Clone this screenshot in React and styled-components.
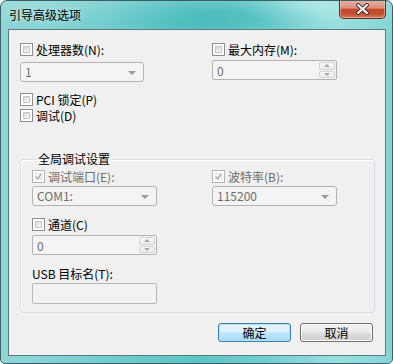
import styled, { createGlobalStyle } from "styled-components";

const GlobalStyle = createGlobalStyle`
  html, body {
    margin: 0;
    padding: 0;
    background: #ffffff;
  }
  * {
    box-sizing: border-box;
  }
`;

const Window = styled.div`
  width: 393px;
  height: 364px;
  border: 1px solid #3d5f63;
  border-radius: 7px 7px 5px 5px;
  padding: 0 6px 7px 7px;
  display: flex;
  flex-direction: column;
  overflow: hidden;
  font-family: "Noto Sans CJK SC", "Noto Sans", sans-serif;
  font-size: 12px;
  background:
    linear-gradient(180deg, rgba(255, 255, 255, 0.15) 0, rgba(255, 255, 255, 0) 22px),
    radial-gradient(ellipse 110px 26px at 215px 12px, rgba(60, 182, 184, 0.9) 0%, rgba(60, 182, 184, 0) 100%),
    radial-gradient(ellipse 60px 20px at 300px 6px, rgba(175, 232, 232, 0.9) 0%, rgba(175, 232, 232, 0) 100%),
    linear-gradient(90deg, #8fd6d6 0%, #86d3d4 12%, #6ecbcc 30%, #5cc4c5 50%, #74cecf 68%, #9adfdf 86%, #85d5d6 100%);
`;

const TitleBar = styled.div`
  height: 28px;
  display: flex;
  align-items: flex-start;
  justify-content: space-between;
`;

const Title = styled.div`
  margin: 6px 0 0 1px;
  line-height: 16px;
  color: #000;
  text-shadow: 0 0 6px rgba(255, 255, 255, 0.8);
`;

const CloseButton = styled.div`
  width: 47px;
  height: 19px;
  margin-top: -1px;
  border: 1px solid #5e2d24;
  border-top: none;
  border-radius: 0 0 5px 5px;
  display: flex;
  align-items: center;
  justify-content: center;
  box-shadow: inset 0 0 0 1px rgba(255, 220, 210, 0.45);
  background: linear-gradient(180deg, #eab3a6 0%, #dd8c7b 45%, #c6472c 52%, #c44f30 78%, #da7b5d 100%);
`;

const Client = styled.div`
  flex: 1;
  border: 1px solid #5d7c82;
  background: #f0f0f0;
  display: flex;
  flex-direction: column;
  padding: 13px 0 11px 0;
`;

const TopGrid = styled.div`
  display: grid;
  grid-template-columns: 192px 1fr;
  padding-left: 11px;
`;

const Column = styled.div`
  display: flex;
  flex-direction: column;
`;

const CheckRow = styled.label`
  display: flex;
  align-items: center;
  gap: 3px;
  height: 13px;
  margin-top: ${(p) => p.$mt || 0}px;
  line-height: 13px;
  color: ${(p) => (p.$disabled ? "#6d6d6d" : "#000")};
  white-space: nowrap;
`;

const Box = styled.span`
  width: 13px;
  height: 13px;
  flex: none;
  border: 1px solid ${(p) => (p.$disabled ? "#b4b4b4" : "#8e8f8f")};
  padding: 2px;
  background: #fff;
  display: flex;
  align-items: center;
  justify-content: center;
  position: relative;

  &::before {
    content: "";
    position: absolute;
    inset: 2px;
    background: ${(p) =>
      p.$disabled
        ? "#f4f4f4"
        : "linear-gradient(135deg, #d3d3d3 0%, #e9e9e9 50%, #fafafa 100%)"};
    border: 1px solid ${(p) => (p.$disabled ? "#e6e6e6" : "#c8c8c8")};
  }

  svg {
    position: relative;
  }
`;

const Select = styled.div`
  width: ${(p) => p.$w || 124}px;
  height: ${(p) => p.$h || 20}px;
  margin-top: ${(p) => p.$mt || 0}px;
  border: 1px solid #b3b3b3;
  border-radius: 3px;
  background: #f4f4f4;
  color: #6d6d6d;
  display: flex;
  align-items: center;
  justify-content: space-between;
  padding: 0 7px 0 4px;
  line-height: 14px;
`;

const Arrow = styled.span`
  width: 0;
  height: 0;
  border-left: 4px solid transparent;
  border-right: 4px solid transparent;
  border-top: 4px solid #9a9a9a;
  margin-top: 2px;
`;

const Spin = styled.div`
  width: ${(p) => p.$w || 125}px;
  height: 20px;
  margin-top: ${(p) => p.$mt || 0}px;
  border: 1px solid #b3b3b3;
  border-radius: 2px;
  background: #f4f4f4;
  color: #6d6d6d;
  display: flex;
  align-items: center;
  justify-content: space-between;
  padding: 1px 1px 1px 4px;
`;

const SpinButtons = styled.div`
  width: 16px;
  height: 100%;
  display: flex;
  flex-direction: column;
  gap: 1px;
`;

const SpinHalf = styled.div`
  flex: 1;
  border: 1px solid #d3d3d3;
  border-radius: 2px;
  background: linear-gradient(180deg, #f7f7f7, #ececec);
  display: flex;
  align-items: center;
  justify-content: center;

  &::after {
    content: "";
    width: 0;
    height: 0;
    border-left: 3px solid transparent;
    border-right: 3px solid transparent;
    ${(p) => (p.$up ? "border-bottom: 3px solid #a8a8a8;" : "border-top: 3px solid #a8a8a8;")}
  }
`;

const Group = styled.fieldset`
  margin: 29px 10px 0 11px;
  padding: 3px 0 8px 11px;
  border: 1px solid #d5dfe5;
  border-radius: 3px;
  min-width: 0;
  box-shadow: 1px 1px 0 #ffffff inset;
`;

const Legend = styled.legend`
  margin-left: 4px;
  padding: 0 2px;
  line-height: 16px;
  color: #000;
`;

const GroupGrid = styled.div`
  display: grid;
  grid-template-columns: 180px 1fr;
`;

const Label = styled.div`
  margin-top: ${(p) => p.$mt || 0}px;
  line-height: 13px;
  height: 13px;
  color: #000;
`;

const TextBox = styled.div`
  width: 125px;
  height: 21px;
  margin-top: ${(p) => p.$mt || 0}px;
  border: 1px solid #b8b8b8;
  border-radius: 2px;
  background: #f2f2f2;
`;

const ButtonRow = styled.div`
  display: flex;
  justify-content: flex-end;
  gap: 9px;
  margin: 10px 12px 0 0;
`;

const Button = styled.div`
  width: 73px;
  height: 19px;
  border-radius: 3px;
  display: flex;
  align-items: center;
  justify-content: center;
  color: #000;
  line-height: 14px;
  border: 1px solid ${(p) => (p.$primary ? "#3c7fb1" : "#707070")};
  box-shadow: inset 0 0 0 1px ${(p) => (p.$primary ? "#a9e4f9" : "#fbfbfb")};
  background: ${(p) =>
    p.$primary
      ? "linear-gradient(180deg, #eaf6fd 0%, #d9f0fc 48%, #bee6fd 52%, #a7d9f5 100%)"
      : "linear-gradient(180deg, #f2f2f2 0%, #ebebeb 48%, #dddddd 52%, #cfcfcf 100%)"};
`;

const Check = () => (
  <svg width="9" height="9" viewBox="0 0 9 9">
    <path d="M1 4.5 L3.5 7.5 L8 1" fill="none" stroke="#a6a6a6" strokeWidth="1.6" />
  </svg>
);

const CheckItem = ({ label, checked, disabled, mt }) => (
  <CheckRow $mt={mt} $disabled={disabled}>
    <Box $disabled={disabled}>{checked && <Check />}</Box>
    {label}
  </CheckRow>
);

const SpinBox = ({ value, w, mt }) => (
  <Spin $w={w} $mt={mt}>
    <span>{value}</span>
    <SpinButtons>
      <SpinHalf $up />
      <SpinHalf />
    </SpinButtons>
  </Spin>
);

const App = () => {
  return (
    <>
      <GlobalStyle />
      <Window>
        <TitleBar>
          <Title>引导高级选项</Title>
          <CloseButton>
            <svg width="15" height="12" viewBox="0 0 15 12">
              <path d="M3 2 L12 10 M12 2 L3 10" stroke="#4a3430" strokeWidth="4" strokeLinecap="round" />
              <path d="M3 2 L12 10 M12 2 L3 10" stroke="#ffffff" strokeWidth="2" strokeLinecap="round" />
            </svg>
          </CloseButton>
        </TitleBar>
        <Client>
          <TopGrid>
            <Column>
              <CheckItem label="处理器数(N):" />
              <Select $mt={6}>
                <span>1</span>
                <Arrow />
              </Select>
              <CheckItem label="PCI 锁定(P)" mt={11} />
              <CheckItem label="调试(D)" mt={3} />
            </Column>
            <Column>
              <CheckItem label="最大内存(M):" />
              <SpinBox value="0" mt={4} />
            </Column>
          </TopGrid>

          <Group>
            <Legend>全局调试设置</Legend>
            <GroupGrid>
              <Column>
                <CheckItem label="调试端口(E):" checked disabled />
                <Select $w={125} $mt={3}>
                  <span>COM1:</span>
                  <Arrow />
                </Select>
                <CheckItem label="通道(C)" mt={12} />
                <SpinBox value="0" mt={4} />
                <Label $mt={12}>USB 目标名(T):</Label>
                <TextBox $mt={3} />
              </Column>
              <Column>
                <CheckItem label="波特率(B):" checked disabled />
                <Select $w={125} $mt={3}>
                  <span>115200</span>
                  <Arrow />
                </Select>
              </Column>
            </GroupGrid>
          </Group>

          <ButtonRow>
            <Button $primary>确定</Button>
            <Button>取消</Button>
          </ButtonRow>
        </Client>
      </Window>
    </>
  );
};

export default App;
